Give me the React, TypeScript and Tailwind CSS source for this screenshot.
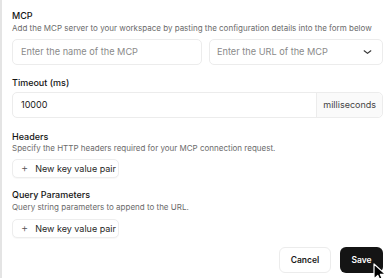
import React from "react";

function KeyValueButton() {
  return (
    <button className="flex items-center gap-[7px] h-[19px] w-[107px] pl-[8px] rounded-[5px] border border-[#ededed] bg-white text-[9px] text-[#1f1f1f] shadow-[0_1px_1px_rgba(0,0,0,0.03)]">
      <span className="text-[11px] leading-none text-[#555] font-light">+</span>
      <span>New key value pair</span>
    </button>
  );
}

export default function App() {
  return (
    <div
      className="relative h-[278px] w-full overflow-hidden bg-white border-l-2 border-[#e4e4e4] pl-[10px] pr-[8px] pt-[10px]"
      style={{ fontFamily: "Inter, 'Noto Sans', sans-serif" }}
    >
      <h2 className="text-[9px] leading-[12px] font-medium text-[#141414]">MCP</h2>
      <p className="mt-[1px] text-[8px] leading-[10px] text-[#6b6b6b] whitespace-nowrap">
        Add the MCP server to your workspace by pasting the configuration details into the form below
      </p>

      <div className="mt-[6px] flex gap-[7px]">
        <div className="flex h-[26px] w-[190px] items-center rounded-[5px] border border-[#ececec] px-[8px] text-[9.2px] text-[#8a8a8a]">
          Enter the name of the MCP
        </div>
        <div className="flex h-[26px] flex-1 items-center justify-between rounded-[5px] border border-[#ececec] pl-[7px] pr-[10px] text-[9.2px] text-[#8a8a8a]">
          <span>Enter the URL of the MCP</span>
          <svg width="9" height="6" viewBox="0 0 9 6" fill="none">
            <path d="M1.2 1.8L4.5 4.4L7.8 1.8" stroke="#333" strokeWidth="1.2" strokeLinecap="round" strokeLinejoin="round" />
          </svg>
        </div>
      </div>

      <h2 className="mt-[12px] text-[9px] leading-[12px] font-medium text-[#141414]">Timeout (ms)</h2>
      <div className="mt-[3px] flex h-[26px] rounded-[5px] border border-[#ececec] text-[9px]">
        <div className="flex flex-1 items-center px-[8px] text-[#1a1a1a]">10000</div>
        <div className="flex items-center border-l border-[#ececec] bg-[#fafafa] px-[6px] text-[#444] rounded-r-[5px]">
          milliseconds
        </div>
      </div>

      <h2 className="mt-[13px] text-[9px] leading-[12px] font-medium text-[#141414]">Headers</h2>
      <p className="text-[8px] leading-[10px] text-[#6b6b6b]">
        Specify the HTTP headers required for your MCP connection request.
      </p>
      <div className="mt-[6px]">
        <KeyValueButton />
      </div>

      <h2 className="mt-[11px] text-[9px] leading-[12px] font-medium text-[#141414]">Query Parameters</h2>
      <p className="mt-[1px] text-[8px] leading-[10px] text-[#6b6b6b]">
        Query string parameters to append to the URL.
      </p>
      <div className="mt-[7px]">
        <KeyValueButton />
      </div>

      <div className="mt-[9px] flex justify-end gap-[9px]">
        <button className="h-[26px] w-[52px] rounded-[6px] border border-[#ececec] bg-white text-[8.5px] font-semibold text-[#1a1a1a]">
          Cancel
        </button>
        <button className="h-[26px] w-[43px] rounded-[6px] bg-[#141414] text-[8.5px] font-semibold text-white">
          Save
        </button>
      </div>

      <svg className="absolute left-[371px] top-[263px]" width="16" height="20" viewBox="0 0 16 20">
        <path d="M1 1L1 16L4.8 12.4L7.5 18.5L10 17.4L7.4 11.4L12.5 11.4Z" fill="#000" stroke="#fff" strokeWidth="1.2" strokeLinejoin="round" />
      </svg>
    </div>
  );
}
